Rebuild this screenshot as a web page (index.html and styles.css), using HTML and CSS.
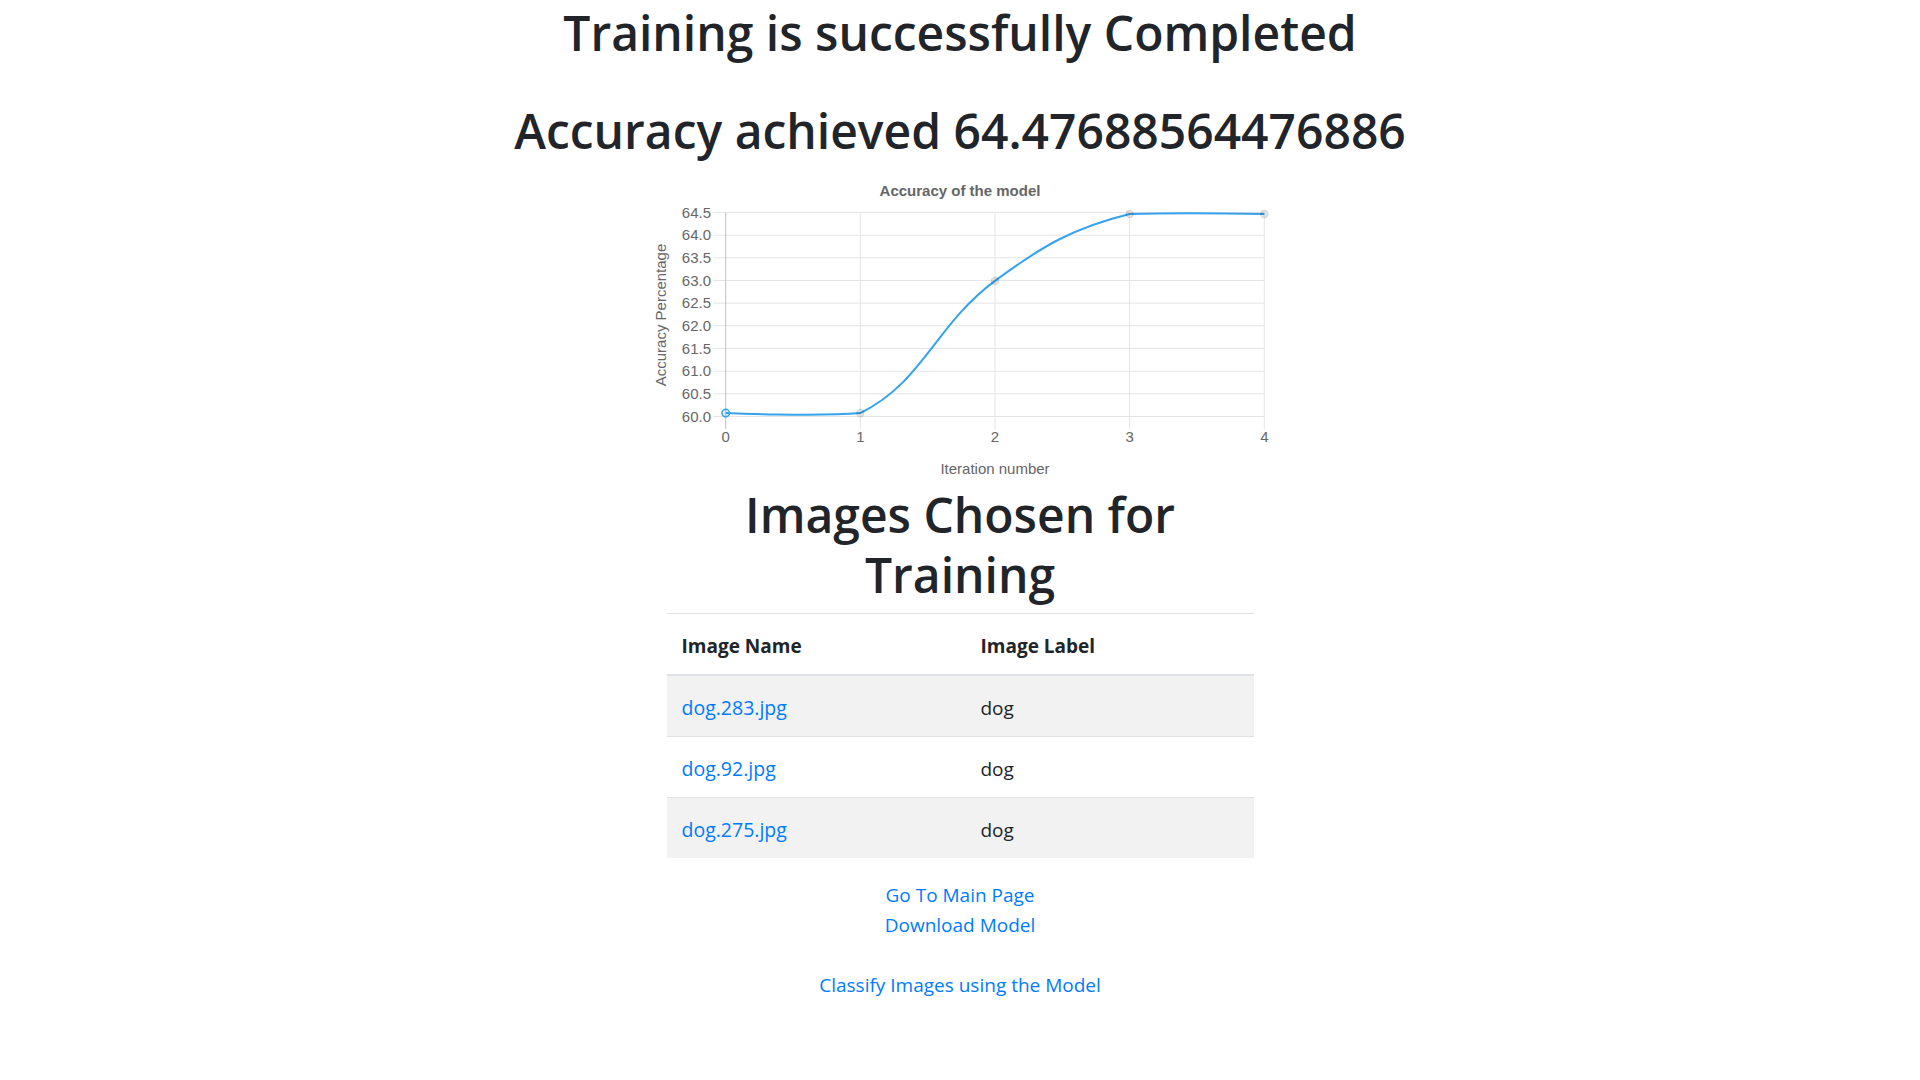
FILE: index.html
```html
<!DOCTYPE html>
<html lang="en">
<head>
<meta charset="utf-8">
<title>Training Completed</title>
<link rel="stylesheet" href="styles.css">
</head>
<body>
<h1 class="title">Training is successfully Completed</h1>
<h1 class="title acc">Accuracy achieved 64.47688564476886</h1>

<div class="chart">
  <svg class="chart-svg" width="626" height="313" viewBox="0 0 626 313">
    <text class="chart-title" x="313" y="26" text-anchor="middle">Accuracy of the model</text>

    <g class="grid">
      <line x1="66" y1="42.5" x2="617.3" y2="42.5"/>
      <line x1="66" y1="65.2" x2="617.3" y2="65.2"/>
      <line x1="66" y1="87.8" x2="617.3" y2="87.8"/>
      <line x1="66" y1="110.5" x2="617.3" y2="110.5"/>
      <line x1="66" y1="133.2" x2="617.3" y2="133.2"/>
      <line x1="66" y1="155.8" x2="617.3" y2="155.8"/>
      <line x1="66" y1="178.5" x2="617.3" y2="178.5"/>
      <line x1="66" y1="201.2" x2="617.3" y2="201.2"/>
      <line x1="66" y1="223.8" x2="617.3" y2="223.8"/>
      <line x1="66" y1="246.5" x2="617.3" y2="246.5"/>
      <line x1="213.3" y1="42.5" x2="213.3" y2="259"/>
      <line x1="348" y1="42.5" x2="348" y2="259"/>
      <line x1="482.6" y1="42.5" x2="482.6" y2="259"/>
      <line x1="617.3" y1="42.5" x2="617.3" y2="259"/>
    </g>
    <line class="axis" x1="78.7" y1="42.5" x2="78.7" y2="259"/>

    <g class="ticks-y">
      <text x="64" y="47.5">64.5</text>
      <text x="64" y="70.2">64.0</text>
      <text x="64" y="92.8">63.5</text>
      <text x="64" y="115.5">63.0</text>
      <text x="64" y="138.2">62.5</text>
      <text x="64" y="160.8">62.0</text>
      <text x="64" y="183.5">61.5</text>
      <text x="64" y="206.2">61.0</text>
      <text x="64" y="228.8">60.5</text>
      <text x="64" y="251.5">60.0</text>
    </g>
    <g class="ticks-x">
      <text x="78.7" y="272">0</text>
      <text x="213.3" y="272">1</text>
      <text x="348" y="272">2</text>
      <text x="482.6" y="272">3</text>
      <text x="617.3" y="272">4</text>
    </g>
    <text class="axis-label" x="348" y="304" text-anchor="middle">Iteration number</text>
    <text class="axis-label" transform="translate(19 145) rotate(-90)" text-anchor="middle">Accuracy Percentage</text>

    <path class="data-line" d="M78.7,243.1 C78.7,243.1 168.5,246.7 213.3,243.1 C276.2,212.2 288.1,155.2 348,110.9 C395.8,75.6 425.8,58.1 482.6,44 C533.5,42.7 617.3,44 617.3,44"/>
    <circle class="pt" cx="213.3" cy="243.1" r="3.75"/>
    <circle class="pt" cx="348" cy="110.9" r="3.75"/>
    <circle class="pt" cx="482.6" cy="44" r="3.75"/>
    <circle class="pt" cx="617.3" cy="44" r="3.75"/>
    <circle class="pt-first" cx="78.7" cy="243.1" r="3.75"/>
  </svg>
</div>

<section class="images">
  <h1 class="title">Images Chosen for Training</h1>
  <table class="table">
    <thead>
      <tr><th class="col-name">Image Name</th><th>Image Label</th></tr>
    </thead>
    <tbody>
      <tr><td><a href="#">dog.283.jpg</a></td><td>dog</td></tr>
      <tr><td><a href="#">dog.92.jpg</a></td><td>dog</td></tr>
      <tr><td><a href="#">dog.275.jpg</a></td><td>dog</td></tr>
    </tbody>
  </table>
  <div class="links">
    <a href="#">Go To Main Page</a>
    <a href="#">Download Model</a>
    <a href="#" class="classify">Classify Images using the Model</a>
  </div>
</section>
</body>
</html>
```

FILE: styles.css
```css
html, body {
  margin: 0;
  padding: 0;
  background: #ffffff;
}

body {
  padding-top: 3px;
  font-family: "Open Sans", "Noto Sans", sans-serif;
  font-size: 19px;
  line-height: 30px;
  color: #212529;
  text-align: center;
}

.title {
  margin: 0 0 10px;
  font-size: 48px;
  line-height: 60px;
  font-weight: 600;
  color: #212529;
}

.title.acc {
  margin-top: 38px;
  margin-bottom: 9px;
}

.chart {
  display: flex;
  justify-content: center;
}

.chart-svg {
  display: block;
  font-family: "Liberation Sans", Arial, sans-serif;
}

.chart-title {
  font-size: 15px;
  font-weight: bold;
  fill: #666666;
}

.grid line {
  stroke: #e5e5e5;
  stroke-width: 1;
}

.axis {
  stroke: #bfbfbf;
  stroke-width: 1;
}

.ticks-y text {
  font-size: 15px;
  fill: #666666;
  text-anchor: end;
}

.ticks-x text {
  font-size: 15px;
  fill: #666666;
  text-anchor: middle;
}

.axis-label {
  font-size: 15px;
  fill: #666666;
}

.data-line {
  fill: none;
  stroke: #36a2eb;
  stroke-width: 2;
}

.pt {
  fill: rgba(0, 0, 0, 0.1);
  stroke: rgba(0, 0, 0, 0.1);
  stroke-width: 1.25;
}

.pt-first {
  fill: rgba(54, 162, 235, 0.15);
  stroke: #36a2eb;
  stroke-width: 1.5;
}

.images {
  width: 587px;
  margin: 0 auto;
}

.images .title {
  margin-top: 2px;
  margin-bottom: 8px;
}

.table {
  width: 100%;
  border-collapse: collapse;
  margin-bottom: 22px;
  text-align: left;
}

.table th,
.table td {
  padding: 17px 15px 13px;
  border-top: 1px solid #dee2e6;
  vertical-align: top;
}

.table th {
  font-weight: 700;
}

.table thead th {
  border-bottom: 2px solid #dee2e6;
}

.col-name {
  width: 269px;
}

.table td a {
  font-size: 19.5px;
}

.table tbody tr:nth-child(odd) {
  background: #f2f2f2;
}

a {
  color: #007bff;
  text-decoration: none;
}

.links {
  display: flex;
  flex-direction: column;
  align-items: center;
}

.links .classify {
  margin-top: 30px;
}
```
